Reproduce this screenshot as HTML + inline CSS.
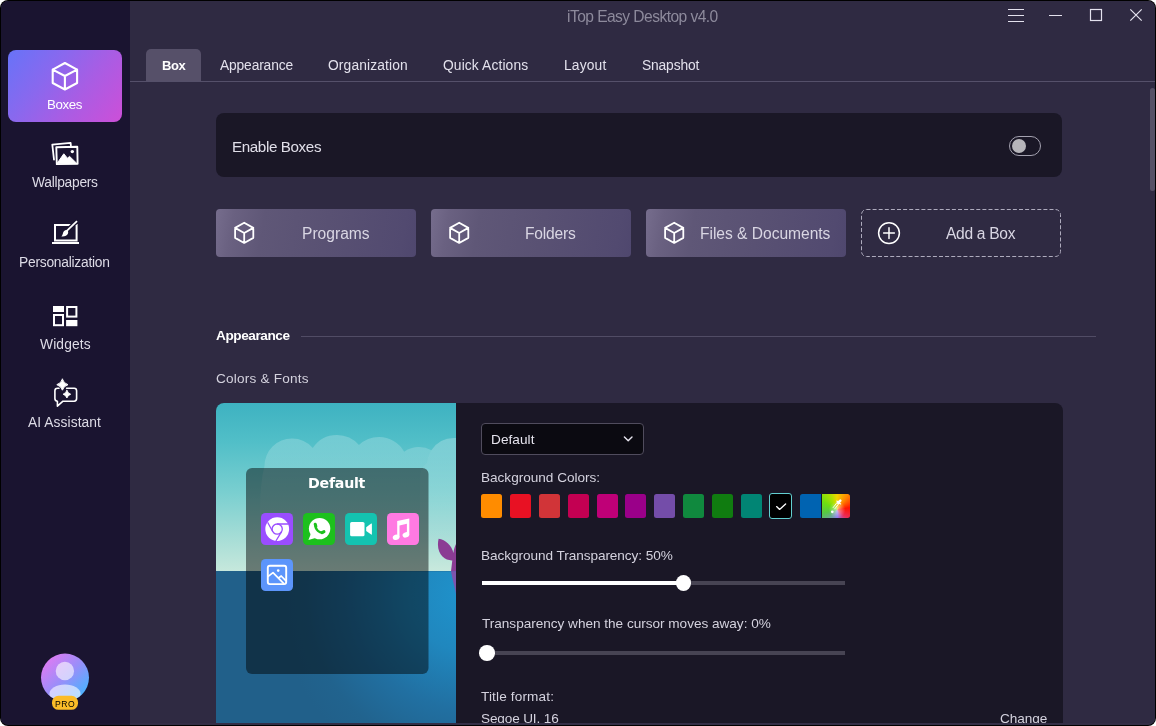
<!DOCTYPE html>
<html><head><meta charset="utf-8">
<style>
*{box-sizing:border-box;margin:0;padding:0}
html,body{width:1156px;height:726px;overflow:hidden;background:#fff;font-family:"Liberation Sans",sans-serif;}
#win{position:absolute;left:0;top:0;width:1156px;height:726px;background:#000;border-radius:8px;overflow:hidden}
#inner{position:absolute;left:1px;top:1px;width:1154px;height:724px;background:linear-gradient(90deg,#1c1732 129px,#332e46 129px);border-radius:7px;overflow:hidden}
#app{position:absolute;left:-1px;top:-1px;width:1156px;height:723px;background:#2f2a42;overflow:hidden}
#side{position:absolute;left:0;top:0;width:130px;height:726px;background:#1a1430}
.abs{position:absolute}
.tx{position:absolute;white-space:pre;line-height:20px;height:20px;will-change:transform}
.btn{position:absolute;top:209px;height:48px;width:200px;border-radius:4px;background:linear-gradient(100deg,#766d8d 0%,#6a6181 9%,#5f5777 24%,#595173 55%,#524a70 92%,#4f476e 100%)}
.sw{position:absolute;top:494px;width:21px;height:24px;border-radius:2.5px}
.ic{position:absolute;width:32px;height:32px;border-radius:4.5px}
</style></head><body>
<div id="win"><div id="inner"><div id="app">
<div id="side"></div>
<!-- window controls -->
<svg class="abs" style="left:1000px;top:0px" width="156" height="32" viewBox="0 0 156 32" fill="none" stroke="#e4e2ee" stroke-width="1.2">
  <path d="M8 9.5h16M8 15.5h16M8 21.5h16"/>
  <path d="M49 15.5h13"/>
  <rect x="90.5" y="9.5" width="11" height="11"/>
  <path d="M130.3 9.3l11.4 11.4M141.7 9.3l-11.4 11.4"/>
</svg>
<!-- tabs -->
<div class="abs" style="left:130px;top:81px;width:1025px;height:1px;background:#55506a"></div>
<div class="abs" style="left:146px;top:49px;width:55px;height:32px;background:#565069;border-radius:5px 5px 0 0"></div>
<!-- scrollbar -->
<div class="abs" style="left:1150px;top:88px;width:5px;height:103px;background:#565166;border-radius:2.5px"></div>
<!-- enable card -->
<div class="abs" style="left:216px;top:113px;width:846px;height:64px;background:#1a1726;border-radius:8px"></div>
<div class="abs" style="left:1009px;top:136px;width:32px;height:20px;border:1px solid #a4a2b0;border-radius:10px"></div>
<div class="abs" style="left:1012px;top:139px;width:14px;height:14px;background:#b6b5ba;border-radius:7px"></div>
<!-- buttons -->
<div class="btn" style="left:216px"></div>
<div class="btn" style="left:431px"></div>
<div class="btn" style="left:646px"></div>
<svg class="abs" style="left:216px;top:209px" width="846" height="48" viewBox="0 0 846 48" fill="none" stroke="#fff" stroke-width="1.8" stroke-linejoin="round" stroke-linecap="round">
    <path transform="translate(28.2 23.85)" d="M0 -10.1L9.1 -5V5L0 10.1L-9.1 5V-5ZM-9.1 -5L0 0.2L9.1 -5M0 0.2V10.1"/>
  <path transform="translate(243.2 23.85)" d="M0 -10.1L9.1 -5V5L0 10.1L-9.1 5V-5ZM-9.1 -5L0 0.2L9.1 -5M0 0.2V10.1"/>
  <path transform="translate(458.2 23.85)" d="M0 -10.1L9.1 -5V5L0 10.1L-9.1 5V-5ZM-9.1 -5L0 0.2L9.1 -5M0 0.2V10.1"/>
  <rect x="645.5" y="0.5" width="199" height="47" rx="5" stroke="#aeabbd" stroke-width="1" stroke-dasharray="4 2.1" stroke-linecap="butt"/>
  <circle cx="673" cy="24.1" r="10.4" stroke-width="1.5"/>
  <path d="M667.6 24.1h10.8M673 18.7v10.8" stroke-width="1.5"/>
</svg>
<!-- appearance -->
<div class="abs" style="left:301px;top:336px;width:795px;height:1px;background:#514c65"></div>
<!-- big card -->
<div class="abs" style="left:216px;top:403px;width:847px;height:330px;background:#1a1726;border-radius:8px;overflow:hidden">
  <div class="abs" id="prev" style="left:0;top:0;width:240px;height:330px;overflow:hidden;background:linear-gradient(180deg,#3eb2c1 0px,#52bfc8 40px,#7acfd0 90px,#a6ddd6 135px,#c6e8dc 168px,#21608a 168.3px,#21608a 330px)">
    <svg class="abs" style="left:0;top:0" width="240" height="330" viewBox="0 0 240 330">
  <defs>
    <radialGradient id="sea" cx="252" cy="192" r="190" gradientUnits="userSpaceOnUse">
      <stop offset="0" stop-color="#1f93cc"/><stop offset="0.3" stop-color="#2087be"/><stop offset="0.6" stop-color="#2170a2"/><stop offset="0.85" stop-color="#21638e"/><stop offset="1" stop-color="#21608a"/>
    </radialGradient>
  </defs>
  <!-- clouds -->
  <clipPath id="cl1"><circle cx="76" cy="63" r="27.5"/><circle cx="121" cy="61" r="29"/><circle cx="163" cy="63" r="29"/><circle cx="203" cy="70" r="26"/><path d="M48.5 63Q44 80 44 110V173H229V63Z"/><circle cx="238" cy="62" r="27"/><circle cx="222" cy="74" r="18"/><rect x="204" y="74" width="40" height="100"/></clipPath>
  <clipPath id="cl2"><circle cx="238" cy="62" r="27"/><circle cx="222" cy="74" r="18"/><rect x="204" y="74" width="40" height="100"/></clipPath>
  <linearGradient id="clg" x1="0" y1="30" x2="0" y2="140" gradientUnits="userSpaceOnUse"><stop offset="0" stop-color="#fff" stop-opacity="0.22"/><stop offset="0.5" stop-color="#fff" stop-opacity="0.09"/><stop offset="1" stop-color="#fff" stop-opacity="0"/></linearGradient>
  <rect x="0" y="0" width="240" height="168" fill="url(#clg)" clip-path="url(#cl1)"/>
  <rect x="0" y="0" width="240" height="168" fill="#fff" fill-opacity="0.05" clip-path="url(#cl2)"/>
  <rect x="0" y="168.3" width="240" height="162" fill="url(#sea)"/>
  <!-- whale tail -->
  <path d="M222.6 135.7C229.5 136.5 236 142.5 237.4 150C237.8 146 239 142.5 240.5 140V168.3H235L236.3 157.4C229 157.8 219.3 151 222.6 135.7Z" fill="#8b3c94"/>
  <path d="M235 168.3H240.5V194C239.4 186 236.5 177 235 168.3Z" fill="#7d54ae"/>
  <!-- box -->
  <rect x="30" y="65" width="182.5" height="206" rx="6" fill="#000" fill-opacity="0.47"/>
</svg>
<div class="ic" style="left:45px;top:110px;background:#9a4dff"></div>
<div class="ic" style="left:87px;top:110px;background:#1dc11d"></div>
<div class="ic" style="left:129px;top:110px;background:#14c3b0"></div>
<div class="ic" style="left:171px;top:110px;background:#ff7ae2"></div>
<div class="ic" style="left:45px;top:156px;background:#5c95fb"></div>
<svg class="abs" style="left:45px;top:110px" width="160" height="80" viewBox="0 0 160 80">
  <!-- chrome -->
  <circle cx="16.2" cy="16.1" r="11.9" fill="#fff"/>
  <g fill="none" stroke="#9a4dff" stroke-width="1.3">
    <circle cx="16.2" cy="16.1" r="5.1"/>
    <path d="M16.2 11H27.5M11.8 18.7L6.6 9.3M20.6 18.7L14.9 28"/>
  </g>
  <!-- whatsapp -->
  <g transform="translate(42 0)">
    <circle cx="16.6" cy="15.6" r="10.7" fill="#fff"/>
    <path d="M7.8 21L5.4 27L12.4 25Z" fill="#fff"/>
    <path d="M12.4 11.4C11.9 14 13.2 16.4 14.9 17.9C16.7 19.5 18.8 20.1 20.8 19.1" fill="none" stroke="#1dc11d" stroke-width="2.1" stroke-linecap="round"/><path d="M12.2 11.2L12.9 13.4M19 19.6L21 18.6" fill="none" stroke="#1dc11d" stroke-width="3" stroke-linecap="round"/>
  </g>
  <!-- video -->
  <g transform="translate(84 0)" fill="#fff">
    <rect x="5.1" y="8.9" width="14.4" height="14.4" rx="1.6"/>
    <path d="M21.2 14.2L26.2 10.6Q26.9 10.2 26.9 11.1V21.1Q26.9 22 26.2 21.6L21.2 18Z"/>
  </g>
  <!-- music -->
  <g transform="translate(126 0)" fill="#fff">
    <path d="M10.2 8L22.3 5.6V21.8H19.9V10.7L12.5 12.6V24.3H10.2Z"/>
    <ellipse cx="9.1" cy="24.3" rx="3.4" ry="2.6" transform="rotate(-20 9.1 24.3)"/>
    <ellipse cx="18.9" cy="21.9" rx="3.4" ry="2.6" transform="rotate(-20 18.9 21.9)"/>
  </g>
  <!-- image -->
  <g transform="translate(0 46)" fill="none" stroke="#fff" stroke-width="1.9" stroke-linejoin="round" stroke-linecap="round">
    <rect x="6.8" y="6.7" width="18.4" height="18.4" rx="2"/>
    <path d="M7.2 17.4L12 13.6L22.6 24.4M18 18.6L20.2 17L24.8 21.6" stroke-width="1.7"/>
    <circle cx="17.2" cy="11.6" r="1.3" fill="#fff" stroke="none"/>
  </g>
</svg>

  </div>
</div>
<!-- dropdown -->
<div class="abs" style="left:481px;top:423px;width:163px;height:32px;border:1px solid #504c5d;border-radius:4px;background:#0b0a11"></div>
<svg class="abs" style="left:620px;top:431px" width="16" height="16" viewBox="0 0 16 16" fill="none" stroke="#e8e6f0" stroke-width="1.4" stroke-linecap="round" stroke-linejoin="round"><path d="M4.4 5.9L8.2 9.7L12 5.9"/></svg>
<!-- swatches -->
<div class="sw" style="left:481px;background:#ff8c00"></div>
<div class="sw" style="left:510px;background:#e81123"></div>
<div class="sw" style="left:539px;background:#d13438"></div>
<div class="sw" style="left:568px;background:#c30052"></div>
<div class="sw" style="left:597px;background:#bf0077"></div>
<div class="sw" style="left:625px;background:#9a0089"></div>
<div class="sw" style="left:654px;background:#744da9"></div>
<div class="sw" style="left:683px;background:#10893e"></div>
<div class="sw" style="left:712px;background:#107c10"></div>
<div class="sw" style="left:741px;background:#018574"></div>
<div class="abs" style="left:769px;top:493px;width:23px;height:26px;border-radius:3px;background:#000;border:1px solid #62cfd0"></div>
<svg class="abs" style="left:769px;top:493px" width="23" height="26" viewBox="0 0 23 26" fill="none" stroke="#fff" stroke-width="1.3" stroke-linecap="round" stroke-linejoin="round"><path d="M7.6 13.6L10.6 16.4L16.6 10.9"/></svg>
<div class="sw" style="left:800px;width:21.3px;background:#0063b1;border-radius:2.5px 0 0 2.5px"></div>
<div class="sw" style="left:822.2px;width:27.8px;border-radius:0 2.5px 2.5px 0;background:radial-gradient(circle at 54% 66%,rgba(255,255,255,.55) 0,rgba(255,255,255,0) 38%),conic-gradient(from 0deg at 54% 66%,#f2d400 0deg,#ff8a00 35deg,#ff1400 80deg,#ea2c58 130deg,#8c78f0 178deg,#6ea4a0 218deg,#56c846 255deg,#6ee010 300deg,#b4e000 338deg,#f2d400 360deg)"></div>
<svg class="abs" style="left:822px;top:494px" width="28" height="24" viewBox="0 0 28 24" fill="none" stroke="#fff" stroke-linecap="round"><path d="M11.1 13.6L15.6 7.9M12.7 14.9L17.2 9.2" stroke-width="0.9"/><path d="M16.2 8.8L18.3 6.6" stroke-width="2.6"/><path d="M14.8 7L18.6 10" stroke-width="1.1"/><circle cx="10.3" cy="17.8" r="1.35" fill="#fff" stroke="none"/></svg>
<!-- sliders -->
<div class="abs" style="left:482px;top:581px;width:363px;height:4px;background:#474453"></div>
<div class="abs" style="left:482px;top:581px;width:200px;height:4px;background:#fff"></div>
<div class="abs" style="left:675.5px;top:575.2px;width:15.6px;height:15.6px;border-radius:50%;background:#fff"></div>
<div class="abs" style="left:482px;top:651px;width:363px;height:4px;background:#474453"></div>
<div class="abs" style="left:479.3px;top:645px;width:15.6px;height:15.6px;border-radius:50%;background:#fff"></div>


<div class="abs" style="left:8px;top:50px;width:114px;height:72px;border-radius:8px;background:linear-gradient(128deg,#6773f8 0%,#8a68ee 35%,#a85de4 62%,#cd4fd8 100%)"></div>
<svg class="abs" style="left:0;top:0" width="130" height="726" viewBox="0 0 130 726" fill="none" stroke="#fff" stroke-linejoin="round" stroke-linecap="round">
  <defs>
    <linearGradient id="av" x1="0.1" y1="0.1" x2="0.9" y2="0.9"><stop offset="0" stop-color="#e07af3"/><stop offset="0.5" stop-color="#998ef9"/><stop offset="1" stop-color="#45b5ff"/></linearGradient>
    <clipPath id="avc"><circle cx="65" cy="677.6" r="24"/></clipPath>
  </defs>
  <!-- boxes cube -->
  <path d="M64.9 63L77.1 69.6V83L64.9 89.5L52.7 83V69.6ZM52.7 69.6L64.9 76L77.1 69.6M64.9 76V89.5" stroke-width="2.1"/>
  <!-- wallpapers -->
  <g stroke-width="1.8">
    <path d="M54 159.6L52.3 144.6L70.6 142.9L70.9 145.6" />
    <path d="M56.3 147.3L77.3 146.8L77.6 163.8L56.8 164.1Z" stroke-width="1.9"/>
    <path d="M57 163.5L63.8 153.8L67.4 158.2L69.6 156.4L76.8 163.4Z" fill="#fff" stroke-width="1"/>
    <circle cx="72.3" cy="151.6" r="1.7" fill="#fff" stroke="none"/>
  </g>
  <!-- personalization -->
  <g stroke-width="2" stroke-linejoin="miter" stroke-linecap="butt">
    <path d="M55 225H76.6V240.6H55Z"/>
    <path d="M78 220.2L65 232.6" stroke="#1a1430" stroke-width="4.4"/>
    <path d="M52 243H79" stroke-width="2.2"/>
    <path d="M77 221.2L66 231.6" stroke-width="1.8"/>
    <path d="M67.4 230.2C65 229.6 63.4 231.4 62.9 233.4C62.6 234.8 62 235.8 61.4 236.4C64.4 236.8 67.2 235.6 68 233.4C68.4 232.2 68.2 231 67.4 230.2Z" fill="#fff" stroke="none"/>
  </g>
  <!-- widgets -->
  <g stroke-width="2" stroke-linejoin="miter" stroke-linecap="butt">
    <rect x="53" y="306" width="11" height="6" fill="#fff" stroke="none"/>
    <rect x="54" y="315" width="9" height="10.2"/>
    <rect x="67.1" y="307" width="9.3" height="9.6"/>
    <rect x="66.1" y="320" width="11.3" height="6.2" fill="#fff" stroke="none"/>
  </g>
  <!-- AI assistant -->
  <g stroke-width="1.6">
    <path d="M59 388.2H57.4Q54.9 388.2 54.9 390.8V398.6Q54.9 401.2 57.4 401.2V406.2L63 401.2H74.2Q76.6 401.2 76.6 398.6V390.8Q76.6 388.2 74.2 388.2H66.6"/>
    <path d="M62.4 379.2Q63.6 383.4 68 384.7Q63.6 386 62.4 390.2Q61.2 386 56.8 384.7Q61.2 383.4 62.4 379.2Z" fill="#fff" stroke-width="1"/>
    <path d="M66.9 390.4Q67.8 393.3 70.7 394.2Q67.8 395.1 66.9 398Q66 395.1 63.1 394.2Q66 393.3 66.9 390.4Z" fill="#fff" stroke-width="0.9"/>
  </g>
  <!-- avatar -->
  <circle cx="65" cy="677.6" r="24" fill="url(#av)" stroke="none"/>
  <g clip-path="url(#avc)" stroke="none" fill="#fff" fill-opacity="0.6">
    <circle cx="64.9" cy="671" r="9.2"/>
    <ellipse cx="65" cy="694" rx="15.6" ry="9.6"/>
  </g>
  <rect x="52" y="695.8" width="26" height="14" rx="6.5" fill="#fbbc28" stroke="none"/>
</svg>


<div class="tx" id="title" style="left:567.1px;top:6.7px;font-size:15.6px;font-weight:normal;color:#8d8a9c;letter-spacing:-0.560px">iTop Easy Desktop v4.0</div>
<div class="tx" id="t1" style="left:161.5px;top:56.2px;font-size:13.0px;font-weight:bold;color:#ffffff;letter-spacing:-0.381px">Box</div>
<div class="tx" id="t2" style="left:220.4px;top:56.0px;font-size:13.8px;font-weight:normal;color:#e3e1ec;letter-spacing:-0.147px">Appearance</div>
<div class="tx" id="t3" style="left:328.3px;top:56.0px;font-size:13.8px;font-weight:normal;color:#e3e1ec;letter-spacing:0.133px">Organization</div>
<div class="tx" id="t4" style="left:443.4px;top:56.0px;font-size:13.8px;font-weight:normal;color:#e3e1ec;letter-spacing:0.126px">Quick Actions</div>
<div class="tx" id="t5" style="left:564.1px;top:56.0px;font-size:13.8px;font-weight:normal;color:#e3e1ec;letter-spacing:0.172px">Layout</div>
<div class="tx" id="t6" style="left:641.7px;top:56.0px;font-size:13.8px;font-weight:normal;color:#e3e1ec;letter-spacing:-0.145px">Snapshot</div>
<div class="tx" id="n1" style="left:47.0px;top:95.1px;font-size:13.3px;font-weight:normal;color:#ffffff;letter-spacing:-0.392px">Boxes</div>
<div class="tx" id="n2" style="left:32.0px;top:172.8px;font-size:13.8px;font-weight:normal;color:#dddbe6;letter-spacing:-0.278px">Wallpapers</div>
<div class="tx" id="n3" style="left:19.1px;top:252.6px;font-size:13.8px;font-weight:normal;color:#dddbe6;letter-spacing:-0.246px">Personalization</div>
<div class="tx" id="n4" style="left:39.7px;top:335.0px;font-size:13.8px;font-weight:normal;color:#dddbe6;letter-spacing:0.143px">Widgets</div>
<div class="tx" id="n5" style="left:28.4px;top:413.0px;font-size:13.8px;font-weight:normal;color:#dddbe6;letter-spacing:0.073px">AI Assistant</div>
<div class="tx" id="en" style="left:231.9px;top:137.0px;font-size:15.2px;font-weight:normal;color:#e0dee8;letter-spacing:-0.385px">Enable Boxes</div>
<div class="tx" id="b1" style="left:302.3px;top:224.0px;font-size:15.6px;font-weight:normal;color:#d9d6e3;letter-spacing:0.001px">Programs</div>
<div class="tx" id="b2" style="left:525.3px;top:224.0px;font-size:15.6px;font-weight:normal;color:#d9d6e3;letter-spacing:-0.200px">Folders</div>
<div class="tx" id="b3" style="left:700.3px;top:224.0px;font-size:15.6px;font-weight:normal;color:#d9d6e3;letter-spacing:-0.029px">Files &amp; Documents</div>
<div class="tx" id="b4" style="left:945.8px;top:224.0px;font-size:15.6px;font-weight:normal;color:#d9d6e3;letter-spacing:-0.309px">Add a Box</div>
<div class="tx" id="ap" style="left:215.6px;top:325.6px;font-size:13.6px;font-weight:bold;color:#ffffff;letter-spacing:-0.425px">Appearance</div>
<div class="tx" id="cf" style="left:215.8px;top:368.5px;font-size:13.6px;font-weight:normal;color:#d4d2de;letter-spacing:0.207px">Colors &amp; Fonts</div>
<div class="tx" id="dd" style="left:491.4px;top:429.8px;font-size:13.6px;font-weight:normal;color:#e6e4ee;letter-spacing:0.070px">Default</div>
<div class="tx" id="bc" style="left:481.2px;top:467.9px;font-size:13.6px;font-weight:normal;color:#d4d2de;letter-spacing:-0.017px">Background Colors:</div>
<div class="tx" id="bt" style="left:481.4px;top:546.4px;font-size:13.6px;font-weight:normal;color:#d4d2de;letter-spacing:-0.058px">Background Transparency: 50%</div>
<div class="tx" id="tw" style="left:481.6px;top:613.6px;font-size:13.6px;font-weight:normal;color:#d4d2de;letter-spacing:-0.020px">Transparency when the cursor moves away: 0%</div>
<div class="tx" id="tf" style="left:481.4px;top:686.5px;font-size:13.6px;font-weight:normal;color:#d4d2de;letter-spacing:0.145px">Title format:</div>
<div class="tx" id="sg" style="left:481.4px;top:709.4px;font-size:13.6px;font-weight:normal;color:#d4d2de;letter-spacing:-0.151px">Segoe UI, 16</div>
<div class="tx" id="ch" style="left:999.9px;top:709.4px;font-size:13.6px;font-weight:normal;color:#d4d2de;letter-spacing:-0.085px">Change</div>
<div class="tx" id="pd" style="font-family:'DejaVu Sans',sans-serif;left:308.2px;top:472.8px;font-size:14.2px;font-weight:bold;color:#ffffff;letter-spacing:-0.248px">Default</div>
<div class="tx" id="pro" style="left:55.0px;top:694.1px;font-size:8.6px;font-weight:normal;color:#000000;letter-spacing:0.588px">PRO</div>
</div></div></div>
</body></html>
